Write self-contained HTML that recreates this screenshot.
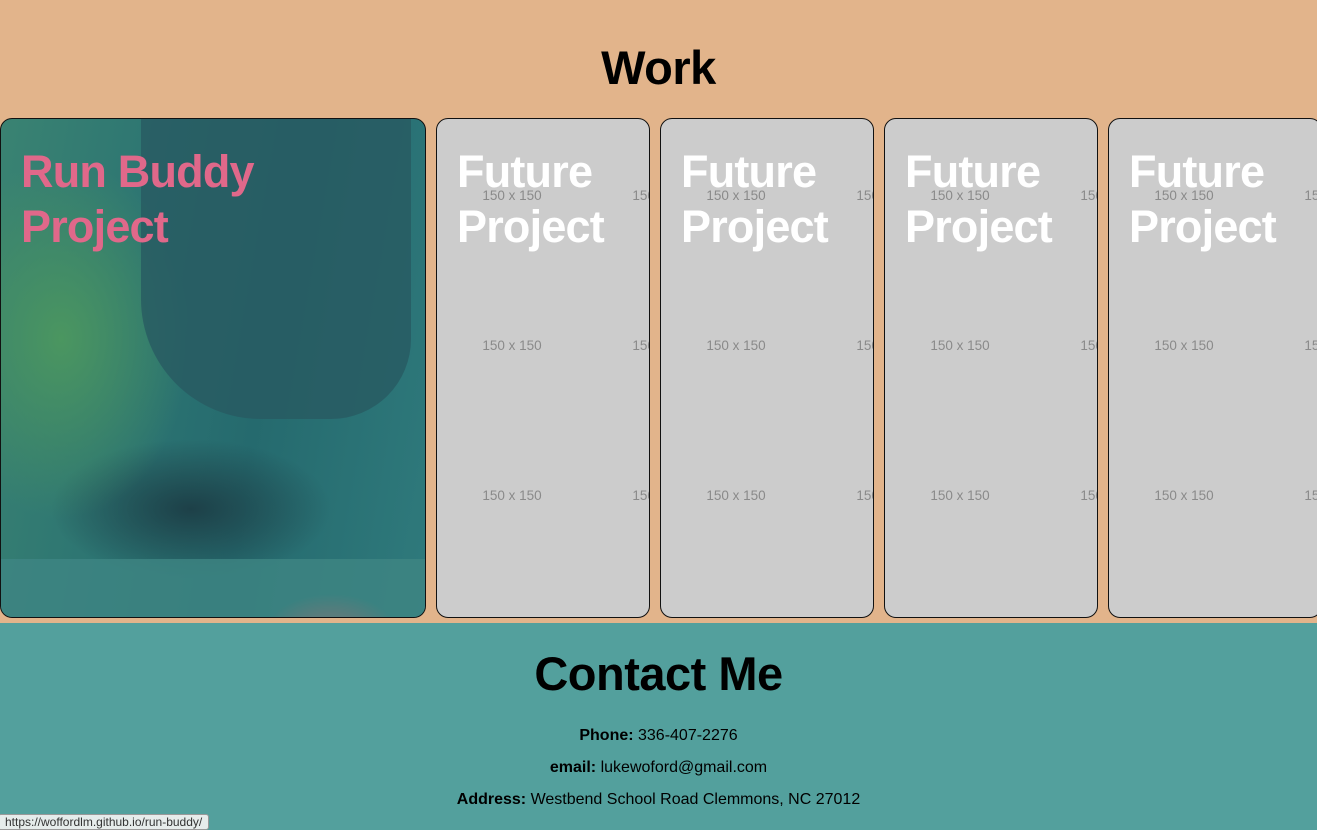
<!DOCTYPE html>
<html><head><style>
body{margin:0;width:1317px;height:826px;overflow:hidden;font-family:"Liberation Sans",sans-serif;background:#53a09d}
.work{height:623px;position:relative;background:#e2b48b}
h2{margin:0;position:absolute;left:0;right:0;text-align:center;font-weight:bold;color:#000;letter-spacing:-0.5px}
.card{position:absolute;top:118px;height:498px;border:1px solid #111;border-radius:12px;overflow:hidden;background:#cccccc}
.card h3{position:absolute;left:20px;top:25px;margin:0;font-size:45px;line-height:55px;font-weight:bold;color:#fff;z-index:2;letter-spacing:-0.8px}
.ph{position:absolute;font-size:13.5px;color:#8a8a8a;width:150px;text-align:center}
.contact{position:absolute;top:623px;left:0;width:1317px;height:203px;background:#53a09d}
.contact p{position:absolute;left:0;right:0;margin:0;text-align:center;font-size:16px;color:#000}
.tip{position:absolute;left:-2px;top:814px;height:14px;padding:0 6px;background:#e6eceb;border:1px solid #999;border-radius:3px;font-size:12px;color:#333;line-height:14px}
</style></head><body>
<div class="work">
<h2 style="top:40px;font-size:47px">Work</h2>
<div class="card" style="left:0;width:424px;background:
radial-gradient(ellipse 70px 45px at 330px 520px,#c9545e 55%,transparent 100%),
radial-gradient(ellipse 130px 180px at 60px 220px,#4b9660,transparent),
radial-gradient(ellipse 140px 70px at 190px 390px,#1d4048,transparent),
linear-gradient(100deg,#3a8372 0%,#2c7472 35%,#256a6e 60%,#2f7a7c 100%);">
<div style="position:absolute;left:140px;top:0;width:270px;height:300px;background:#285a62;border-radius:0 0 80px 120px;opacity:.8"></div>
<div style="position:absolute;left:0;top:440px;width:424px;height:60px;background:#3f8683;opacity:.8"></div>
<h3 style="color:#e0688a">Run Buddy<br>Project</h3>
</div>
<div class="card" style="left:436px;width:212px"><h3>Future<br>Project</h3>
<div class="ph" style="left:0;top:69px">150 x 150</div><div class="ph" style="left:150px;top:69px">150 x 150</div>
<div class="ph" style="left:0;top:219px">150 x 150</div><div class="ph" style="left:150px;top:219px">150 x 150</div>
<div class="ph" style="left:0;top:369px">150 x 150</div><div class="ph" style="left:150px;top:369px">150 x 150</div></div>
<div class="card" style="left:660px;width:212px"><h3>Future<br>Project</h3>
<div class="ph" style="left:0;top:69px">150 x 150</div><div class="ph" style="left:150px;top:69px">150 x 150</div>
<div class="ph" style="left:0;top:219px">150 x 150</div><div class="ph" style="left:150px;top:219px">150 x 150</div>
<div class="ph" style="left:0;top:369px">150 x 150</div><div class="ph" style="left:150px;top:369px">150 x 150</div></div>
<div class="card" style="left:884px;width:212px"><h3>Future<br>Project</h3>
<div class="ph" style="left:0;top:69px">150 x 150</div><div class="ph" style="left:150px;top:69px">150 x 150</div>
<div class="ph" style="left:0;top:219px">150 x 150</div><div class="ph" style="left:150px;top:219px">150 x 150</div>
<div class="ph" style="left:0;top:369px">150 x 150</div><div class="ph" style="left:150px;top:369px">150 x 150</div></div>
<div class="card" style="left:1108px;width:212px"><h3>Future<br>Project</h3>
<div class="ph" style="left:0;top:69px">150 x 150</div><div class="ph" style="left:150px;top:69px">150 x 150</div>
<div class="ph" style="left:0;top:219px">150 x 150</div><div class="ph" style="left:150px;top:219px">150 x 150</div>
<div class="ph" style="left:0;top:369px">150 x 150</div><div class="ph" style="left:150px;top:369px">150 x 150</div></div>
</div>
<div class="contact">
<h2 style="top:23px;font-size:47px">Contact Me</h2>
<p style="top:104px"><b>Phone:</b> 336-407-2276</p>
<p style="top:136px"><b>email:</b> lukewoford@gmail.com</p>
<p style="top:168px"><b>Address:</b> Westbend School Road Clemmons, NC 27012</p>
</div>
<div class="tip">https://woffordlm.github.io/run-buddy/</div>
</body></html>
